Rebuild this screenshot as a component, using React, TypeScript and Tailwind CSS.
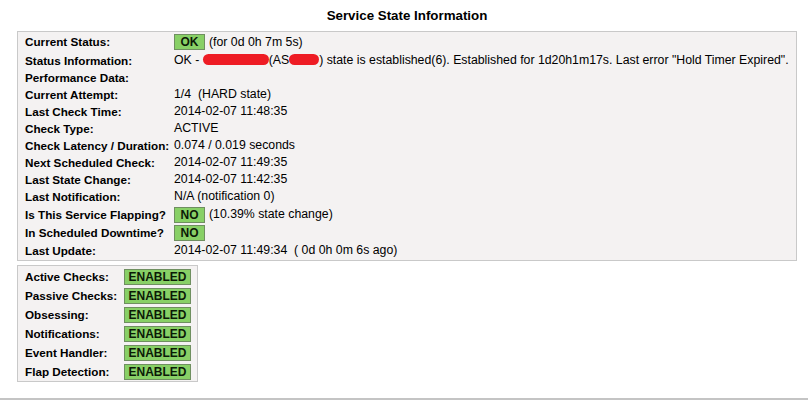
import React from 'react';

type Row = {
  label: string;
  value: React.ReactNode;
  h: string;
};

const Badge: React.FC<{ text: string; wide?: boolean }> = ({ text, wide }) => (
  <span
    className={`inline-flex items-center justify-center h-[16px] bg-[#88d066] border border-[#6f8f60] font-bold text-[12px] text-[#0c1a06] leading-none ${
      wide ? 'w-[67px]' : 'w-[31px]'
    }`}
  >
    {text}
  </span>
);

// red marker scribbles covering hidden hostnames
const Scribble: React.FC<{ w: string }> = ({ w }) => (
  <span className={`inline-block h-[11px] ${w} bg-[#ee1c24] rounded-full align-[-1px]`} />
);

const STATE_ROWS: Row[] = [
  {
    label: 'Current Status:',
    h: 'h-[20px]',
    value: (
      <span className="flex items-center gap-[4px]">
        <Badge text="OK" />
        <span>(for 0d 0h 7m 5s)</span>
      </span>
    ),
  },
  {
    label: 'Status Information:',
    h: 'h-[17px]',
    value: (
      <span className="whitespace-nowrap">
        OK - <Scribble w="w-[66px]" />(AS<Scribble w="w-[30px]" />) state is established(6). Established for 1d20h1m17s. Last error "Hold Timer Expired".
      </span>
    ),
  },
  { label: 'Performance Data:', h: 'h-[17px]', value: '' },
  { label: 'Current Attempt:', h: 'h-[17px]', value: <span className="whitespace-pre">1/4  (HARD state)</span> },
  { label: 'Last Check Time:', h: 'h-[17px]', value: '2014-02-07 11:48:35' },
  { label: 'Check Type:', h: 'h-[17px]', value: 'ACTIVE' },
  { label: 'Check Latency / Duration:', h: 'h-[17px]', value: '0.074 / 0.019 seconds' },
  { label: 'Next Scheduled Check:', h: 'h-[17px]', value: '2014-02-07 11:49:35' },
  { label: 'Last State Change:', h: 'h-[17px]', value: '2014-02-07 11:42:35' },
  { label: 'Last Notification:', h: 'h-[17px]', value: 'N/A (notification 0)' },
  {
    label: 'Is This Service Flapping?',
    h: 'h-[19px]',
    value: (
      <span className="flex items-center gap-[4px]">
        <Badge text="NO" />
        <span>(10.39% state change)</span>
      </span>
    ),
  },
  {
    label: 'In Scheduled Downtime?',
    h: 'h-[18px]',
    value: (
      <span className="flex items-center">
        <Badge text="NO" />
      </span>
    ),
  },
  {
    label: 'Last Update:',
    h: 'h-[17px]',
    value: <span className="whitespace-pre">2014-02-07 11:49:34  ( 0d 0h 0m 6s ago)</span>,
  },
];

const CHECKS = ['Active Checks:', 'Passive Checks:', 'Obsessing:', 'Notifications:', 'Event Handler:', 'Flap Detection:'];

export default function App() {
  return (
    <div
      className="h-[400px] bg-white text-black text-[12px] border-b-2 border-[#c4c4c4] overflow-hidden"
      style={{ fontFamily: '"Liberation Sans", Arial, sans-serif' }}
    >
      <div className="pl-[17px] pt-[8px]">
        <div className="w-[780px] text-center font-bold text-[13.33px] leading-[16px] mb-[7px]">
          Service State Information
        </div>

        {/* state info */}
        <div className="w-[780px] bg-[#f4f2f2] border border-[#c9c9c9] pb-[1px]">
          {STATE_ROWS.map((row) => (
            <div key={row.label} className={`flex items-center ${row.h}`}>
              <div className="w-[156px] shrink-0 pl-[7px] font-bold text-[11.7px] whitespace-nowrap">{row.label}</div>
              <div className="text-[12.3px]">{row.value}</div>
            </div>
          ))}
        </div>

        {/* check states */}
        <div className="mt-[4px] w-[181px] bg-[#f4f2f2] border border-[#c9c9c9] pt-[1px]">
          {CHECKS.map((label) => (
            <div key={label} className="flex items-center h-[19px]">
              <div className="w-[106px] shrink-0 pl-[7px] font-bold text-[11.7px] whitespace-nowrap">{label}</div>
              <Badge text="ENABLED" wide />
            </div>
          ))}
        </div>
      </div>
    </div>
  );
}
